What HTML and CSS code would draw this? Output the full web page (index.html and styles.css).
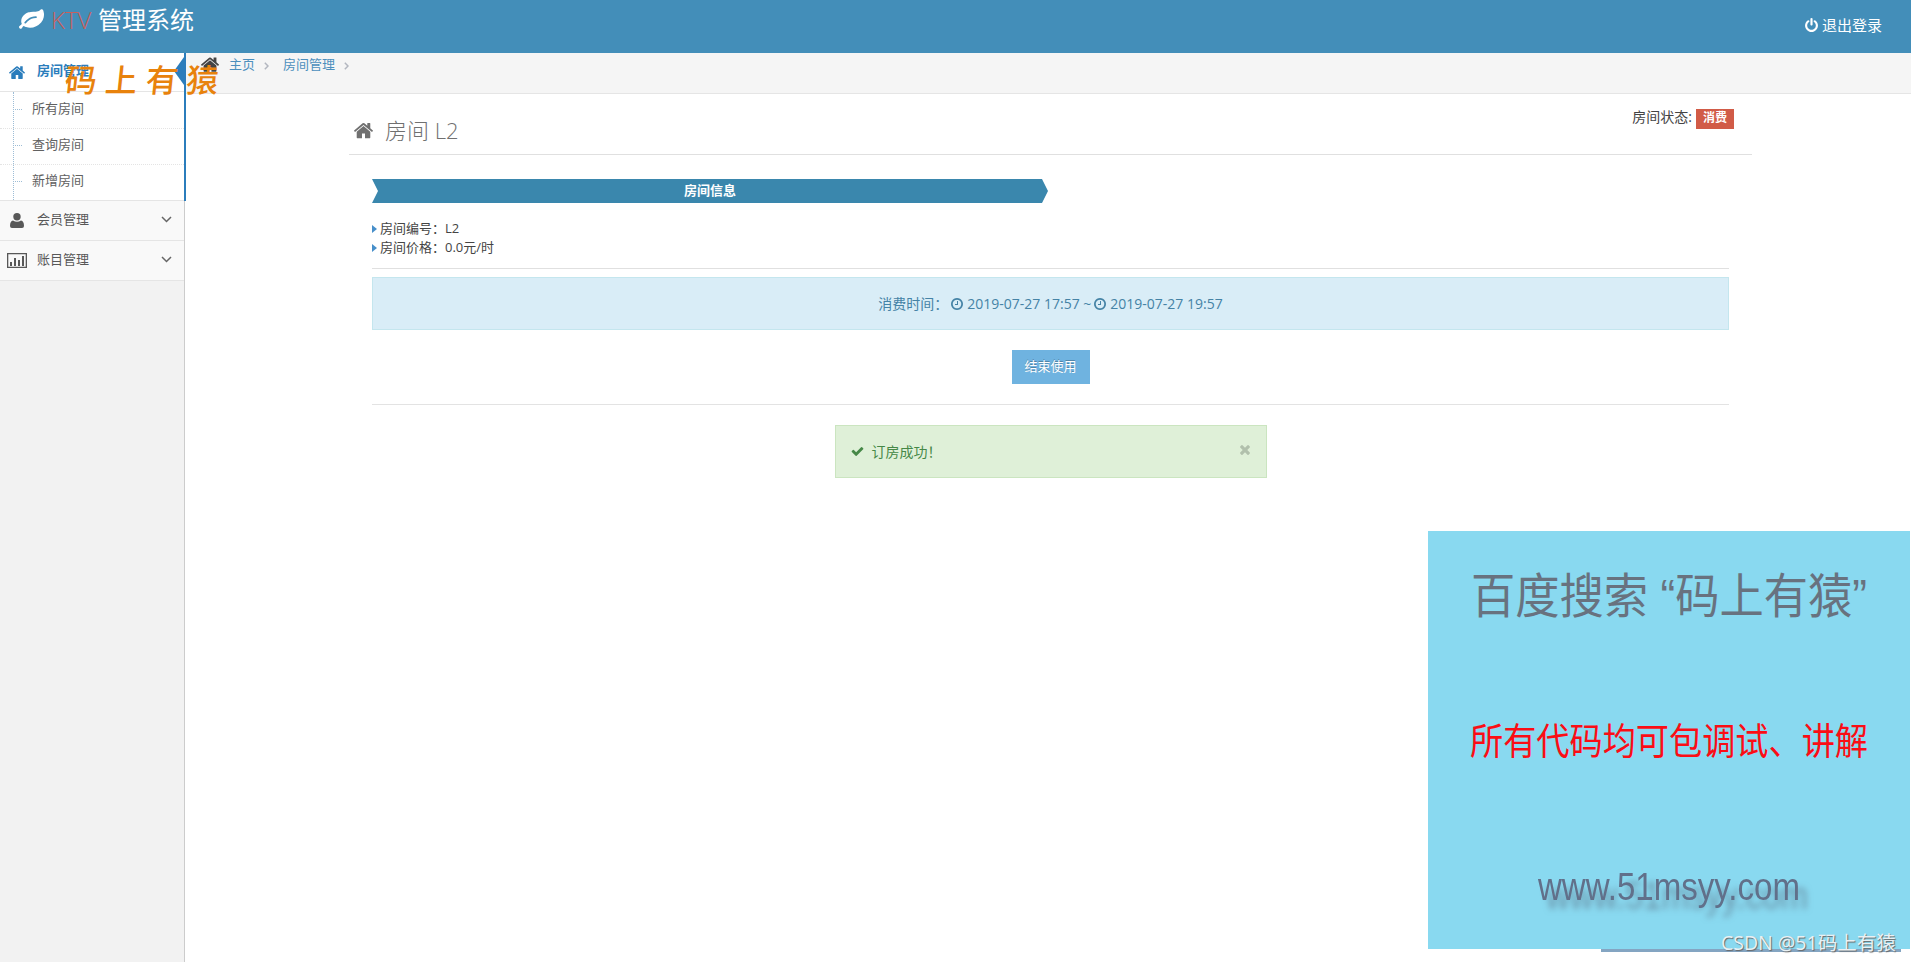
FILE: index.html
```html
<!DOCTYPE html>
<html lang="zh-CN">
<head>
    <meta charset="UTF-8">
    <title>KTV 管理系统</title>
    <link rel="stylesheet" href="styles.css">
</head>
<body>
    <svg class="symbols">
        <symbol id="home" viewBox="90 240 1612 1296"><path d="M1472 992v480q0 26-19 45t-45 19h-384v-384h-256v384h-384q-26 0-45-19t-19-45v-480q0-1 .5-3t.5-3l575-474 575 474q1 2 1 6zm223-69l-62 74q-8 9-21 11h-3q-13 0-21-7l-692-577-692 577q-12 8-24 7-13-2-21-11l-62-74q-8-10-7-23.5t11-21.5l719-599q32-26 76-26t76 26l244 204v-195q0-14 9-23t23-9h192q14 0 23 9t9 23v408l219 182q10 8 11 21.5t-7 23.5z"/></symbol>
        <symbol id="leaf" viewBox="0 256 1792 1408"><path d="M1280 832q0-26-19-45t-45-19q-172 0-318 49.5t-259.5 134-235.5 219.5q-19 21-19 45 0 26 19 45t45 19q24 0 45-19 27-24 74-71t67-66q137-124 268.5-176t313.5-52q26 0 45-19t19-45zm512-198q0 95-20 193-46 224-184.5 383t-357.5 268q-214 108-438 108-148 0-286-47-15-5-88-42t-96-37q-16 0-39.5 32t-45 70-52.5 70-60 32q-43 0-63.5-17.5t-45.5-59.5q-2-4-6-11t-5.5-10-3-9.5-1.5-13.5q0-35 31-73.5t68-65.5 68-56 31-48q0-4-14-38t-16-44q-9-51-9-104 0-115 43.5-220t119-184.5 170.5-139 204-95.5q55-18 145-25.5t179.5-9 178.5-6 163.5-24 113.5-56.5l29.5-29.5 29.5-28 27-20 36.5-16 43.5-4.5q39 0 70.5 46t47.5 112 24 124 8 96z"/></symbol>
        <symbol id="off" viewBox="128 0 1536 1664"><path d="M1664 896q0 156-61 298t-164 245-245 164-298 61-298-61-245-164-164-245-61-298q0-182 80.5-343t226.5-270q43-32 95.5-25t83.5 50q32 42 24.5 94.5t-49.5 84.5q-98 74-151.5 181t-53.5 228q0 104 40.5 198.5t109.5 163.5 163.5 109.5 198.5 40.5 198.5-40.5 163.5-109.5 109.5-163.5 40.5-198.5q0-121-53.5-228t-151.5-181q-42-32-49.5-84.5t24.5-94.5q31-43 84-50t95 25q146 109 226.5 270t80.5 343zm-640-768v640q0 52-38 90t-90 38-90-38-38-90v-640q0-52 38-90t90-38 90 38 38 90z"/></symbol>
        <symbol id="clock" viewBox="128 128 1536 1536"><path d="M1024 544v448q0 14-9 23t-23 9h-320q-14 0-23-9t-9-23v-64q0-14 9-23t23-9h224v-352q0-14 9-23t23-9h64q14 0 23 9t9 23zm416 352q0-148-73-273t-198-198-273-73-273 73-198 198-73 273 73 273 198 198 273 73 273-73 198-198 73-273zm224 0q0 209-103 385.5t-279.5 279.5-385.5 103-385.5-103-279.5-279.5-103-385.5 103-385.5 279.5-279.5 385.5-103 385.5 103 279.5 279.5 103 385.5z"/></symbol>
        <symbol id="check" viewBox="121 334 1550 1188"><path d="M1671 566q0 40-28 68l-724 724-136 136q-28 28-68 28t-68-28l-136-136-362-362q-28-28-28-68t28-68l136-136q28-28 68-28t68 28l294 295 656-657q28-28 68-28t68 28l136 136q28 28 28 68z"/></symbol>
        <symbol id="times" viewBox="302 366 1188 1188"><path d="M1490 1322q0 40-28 68l-136 136q-28 28-68 28t-68-28l-294-294-294 294q-28 28-68 28t-68-28l-136-136q-28-28-28-68t28-68l294-294-294-294q-28-28-28-68t28-68l136-136q28-28 68-28t68 28l294 294 294-294q28-28 68-28t68 28l136 136q28 28 28 68t-28 68l-294 294 294 294q28 28 28 68z"/></symbol>
    </svg>

    <div class="navbar">
        <a class="brand">
            <svg class="icon-leaf"><use href="#leaf"/></svg>
            <span class="red">KTV</span>
            <span class="brand-text">管理系统</span>
        </a>
        <a class="logout"><svg class="icon-off"><use href="#off"/></svg>退出登录</a>
    </div>

    <div class="main-container">
        <div class="sidebar">
            <div class="nav-open">
                <a class="nav-item active"><span class="nav-icon"><svg class="icon-nav-home"><use href="#home"/></svg></span>房间管理</a>
                <ul class="submenu">
                    <li>所有房间</li>
                    <li>查询房间</li>
                    <li>新增房间</li>
                </ul>
            </div>
            <a class="nav-item">
                <span class="nav-icon"><svg width="14" height="15" viewBox="0 0 14 15"><circle cx="7" cy="3.7" r="3.7"/><path d="M3 7.5Q5 8.8 7 8.8T11 7.5Q14 8 14 13Q14 15 12 15H2Q0 15 0 13Q0 8 3 7.5z"/></svg></span>会员管理
                <svg class="arrow" viewBox="0 0 11 7"><path d="M1 1l4.5 4.5L10 1"/></svg>
            </a>
            <a class="nav-item">
                <span class="nav-icon"><svg width="20" height="15" viewBox="0 0 20 15"><path d="M0 0h20v15H0zM1.3 1.3v12.4h17.4V1.3z" fill-rule="evenodd"/><path d="M3 9h2v4H3zM7 5h2v8H7zM11 7h2v6h-2zM15 3h2v10h-2z"/></svg></span>账目管理
                <svg class="arrow" viewBox="0 0 11 7"><path d="M1 1l4.5 4.5L10 1"/></svg>
            </a>
        </div>

        <div class="main-content">
            <div class="breadcrumbs">
                <svg class="icon-bc-home"><use href="#home"/></svg>
                <a>主页</a>
                <svg class="sep" viewBox="0 0 5 8"><path d="M.8.8L4 4 .8 7.2"/></svg>
                <a>房间管理</a>
                <svg class="sep" viewBox="0 0 5 8"><path d="M.8.8L4 4 .8 7.2"/></svg>
            </div>

            <div class="widget">
                <div class="widget-header">
                    <h3><svg class="icon-title"><use href="#home"/></svg>房间 L2</h3>
                    <div class="status">房间状态: <span class="label">消费</span></div>
                </div>
                <div class="widget-body">
                    <div class="ribbon">房间信息</div>
                    <ul class="info">
                        <li>房间编号：L2</li>
                        <li>房间价格：0.0元/时</li>
                    </ul>
                    <div class="alert alert-info">
                        <span class="alert-label">消费时间：</span>
                        <svg class="icon-clock"><use href="#clock"/></svg>
                        <span>2019-07-27 17:57 ~</span>
                        <svg class="icon-clock"><use href="#clock"/></svg>
                        <span>2019-07-27 19:57</span>
                    </div>
                    <button class="btn">结束使用</button>
                    <hr>
                    <div class="alert alert-success">
                        <svg class="icon-check"><use href="#check"/></svg>
                        <span>订房成功！</span>
                        <svg class="close"><use href="#times"/></svg>
                    </div>
                </div>
            </div>
        </div>
    </div>

    <div class="stamp">码上有猿</div>

    <div class="ad">
        <svg viewBox="0 0 482 418">
            <text class="ad-title" transform="translate(43 82) scale(1 1.08)" textLength="396" lengthAdjust="spacingAndGlyphs">百度搜索 “码上有猿”</text>
            <text class="ad-red" transform="translate(42 224) scale(1 1.12)" textLength="398" lengthAdjust="spacingAndGlyphs">所有代码均可包调试、讲解</text>
            <text class="ad-url" x="110" y="369" textLength="262" lengthAdjust="spacingAndGlyphs">www.51msyy.com</text>
        </svg>
    </div>
    <div class="ad-line"></div>
    <div class="watermark">CSDN @51码上有猿</div>
</body>
</html>
```
FILE: styles.css
```css
* {
    box-sizing: border-box;
}
body {
    margin: 0;
    height: 962px;
    overflow: hidden;
    background: #fff;
    color: #444;
    font-family: 'Open Sans', 'Noto Sans CJK SC', sans-serif;
    font-size: 13px;
    font-weight: 400;
    line-height: 19px;
}
svg {
    fill: currentColor;
    flex: none;
}
ul {
    list-style: none;
    margin: 0;
    padding: 0;
}
.symbols {
    position: absolute;
    width: 0;
    height: 0;
}

/* top bar */
.navbar {
    height: 53px;
    background: #438eb9;
    color: #fff;
    display: flex;
    justify-content: space-between;
    padding: 0 29px 0 19px;
}
.brand {
    display: flex;
    align-items: center;
    height: 38px;
    font-size: 24px;
}
.icon-leaf {
    width: 25px;
    height: 20px;
    margin-right: 7px;
}
.red {
    color: #c9605c;
    width: 47px;
    font-weight: 300;
}
.logout {
    display: flex;
    align-items: center;
    height: 50px;
    font-size: 15px;
}
.icon-off {
    width: 13px;
    height: 14px;
    margin-right: 4px;
}

/* sidebar */
.main-container {
    display: flex;
    height: 909px;
}
.sidebar {
    width: 185px;
    background: #f2f2f2;
    border-right: 1px solid #ccc;
}
.nav-item {
    display: flex;
    align-items: center;
    height: 40px;
    padding: 0 12px 2px 0;
    background: #f9f9f9;
    border-bottom: 1px solid #e5e5e5;
    color: #585858;
}
.nav-icon {
    width: 37px;
    padding: 2px 3px 0 0;
    display: flex;
    justify-content: center;
}
.nav-open {
    position: relative;
    width: 186px;
    background: #fff;
    border-right: 2px solid #2b7dbc;
}
.nav-open::after {
    content: '';
    position: absolute;
    top: 4px;
    right: 0;
    border: solid transparent;
    border-width: 14px 10px 14px 0;
    border-right-color: #2b7dbc;
}
.active {
    height: 39px;
    padding-bottom: 3px;
    background: #fff;
    color: #2b7dbc;
    font-weight: 700;
}
.icon-nav-home {
    width: 16px;
    height: 13px;
    margin-top: 2px;
}
.submenu {
    position: relative;
    border-bottom: 1px solid #e5e5e5;
}
.submenu::before {
    content: '';
    position: absolute;
    left: 13px;
    top: 0;
    bottom: 0;
    border-left: 1px dotted #9dbdd6;
}
.submenu li {
    height: 36px;
    line-height: 32px;
    color: #616161;
    display: flex;
}
.submenu li::before {
    content: '';
    width: 7px;
    margin: 17px 10px 0 15px;
    border-top: 1px dotted #9dbdd6;
}
.submenu li + li {
    border-top: 1px dotted #e4e4e4;
    line-height: 30px;
}
.submenu li + li::before {
    margin-top: 16px;
}
.arrow {
    width: 11px;
    height: 7px;
    margin-left: auto;
    fill: none;
    stroke: #666;
    stroke-width: 1.5;
}

/* content */
.main-content {
    flex: 1;
    padding-left: 1px;
}
.breadcrumbs {
    display: flex;
    align-items: center;
    height: 41px;
    padding: 0 0 18px 15px;
    background: #f5f5f5;
    border-bottom: 1px solid #e5e5e5;
    color: #4c8fbd;
}
.icon-bc-home {
    width: 18px;
    height: 15px;
    margin-right: 10px;
    color: #444;
}
.sep {
    width: 5px;
    height: 8px;
    margin: 3px 14px 0 9px;
    fill: none;
    stroke: #b2b6bf;
    stroke-width: 1.5;
}
.widget {
    width: 1403px;
    margin: 15px 0 0 163px;
}
.widget-header {
    display: flex;
    justify-content: space-between;
    height: 46px;
    border-bottom: 1px solid #e0e0e0;
}
h3 {
    display: flex;
    align-items: center;
    height: 42px;
    margin: 0 0 0 5px;
    color: #707070;
    font-size: 22px;
    font-weight: 300;
}
.icon-title {
    width: 19px;
    height: 17px;
    margin-right: 12px;
}
.status {
    display: flex;
    height: 20px;
    margin-right: 18px;
    font-size: 14px;
    line-height: 16px;
}
.label {
    width: 38px;
    height: 20px;
    margin-left: 4px;
    background: #d15b47;
    color: #fff;
    font-size: 12px;
    font-weight: 600;
    line-height: 17px;
    text-align: center;
}
.widget-body {
    padding: 24px 23px 0;
}
.ribbon {
    width: 676px;
    height: 24px;
    background: #3a87ad;
    clip-path: polygon(0 0, 670px 0, 100% 50%, 670px 100%, 0 100%, 6px 50%);
    color: #fff;
    font-weight: 700;
    line-height: 22px;
    text-align: center;
}
.info {
    height: 66px;
    padding-top: 16px;
    margin-bottom: 8px;
    border-bottom: 1px solid #e0e0e0;
}
.info li {
    display: flex;
    align-items: center;
}
.info li::before {
    content: '';
    margin: 1px 3px 0 0;
    border: solid transparent;
    border-width: 4px 0 4px 5px;
    border-left-color: #478fca;
}
.alert {
    display: flex;
    align-items: center;
    height: 53px;
    border: 1px solid #c4e6ee;
    font-size: 14px;
}
.alert-info {
    justify-content: center;
    background: #d9edf7;
    color: #4583a6;
}
.icon-clock {
    width: 12px;
    height: 12px;
    margin: 0 4px 0 3px;
}
.btn {
    display: block;
    width: 78px;
    height: 34px;
    margin: 20px auto;
    padding: 0 0 2px;
    border: 0;
    background: #6fb3e0;
    color: #fff;
    font: inherit;
    text-shadow: 0 -1px 0 rgba(0, 0, 0, 0.25);
}
hr {
    height: 1px;
    margin: 0 0 20px;
    border: 0;
    background: #e3e3e3;
}
.alert-success {
    width: 432px;
    margin: 0 auto;
    padding: 0 16px 0 15px;
    background: #dff0d8;
    border-color: #cbe5c0;
    color: #468847;
}
.icon-check {
    width: 13px;
    height: 9px;
    margin-right: 8px;
}
.close {
    width: 10px;
    height: 10px;
    margin: 0 0 4px auto;
    color: #b1c0ac;
}

/* floating layers */
.stamp {
    position: absolute;
    left: 65px;
    top: 61px;
    color: #e8820c;
    font-size: 32px;
    font-weight: 500;
    letter-spacing: 8.5px;
    line-height: 38px;
    transform: skewX(-6deg);
}
.ad {
    position: absolute;
    left: 1428px;
    top: 531px;
    width: 482px;
    height: 418px;
    background: #89d9f0;
}
.ad svg {
    display: block;
    width: 482px;
    height: 418px;
}
.ad text {
    font-family: 'Liberation Sans', 'Noto Sans CJK SC', sans-serif;
}
.ad-title {
    fill: #68727f;
    font-size: 44px;
}
.ad-red {
    fill: #fb0d15;
    font-size: 33px;
}
.ad-url {
    fill: #61708a;
    font-size: 38px;
    filter: drop-shadow(8px 9px 3px rgba(80, 90, 110, 0.55));
}
.ad-line {
    position: absolute;
    left: 1601px;
    top: 949px;
    width: 300px;
    height: 3px;
    background: #84a5c2;
}
.watermark {
    position: absolute;
    left: 1721px;
    top: 930px;
    color: #e9f1f4;
    font-size: 19.5px;
    line-height: 26px;
    text-shadow: 1px 1px 1px #666;
    white-space: nowrap;
}
```
